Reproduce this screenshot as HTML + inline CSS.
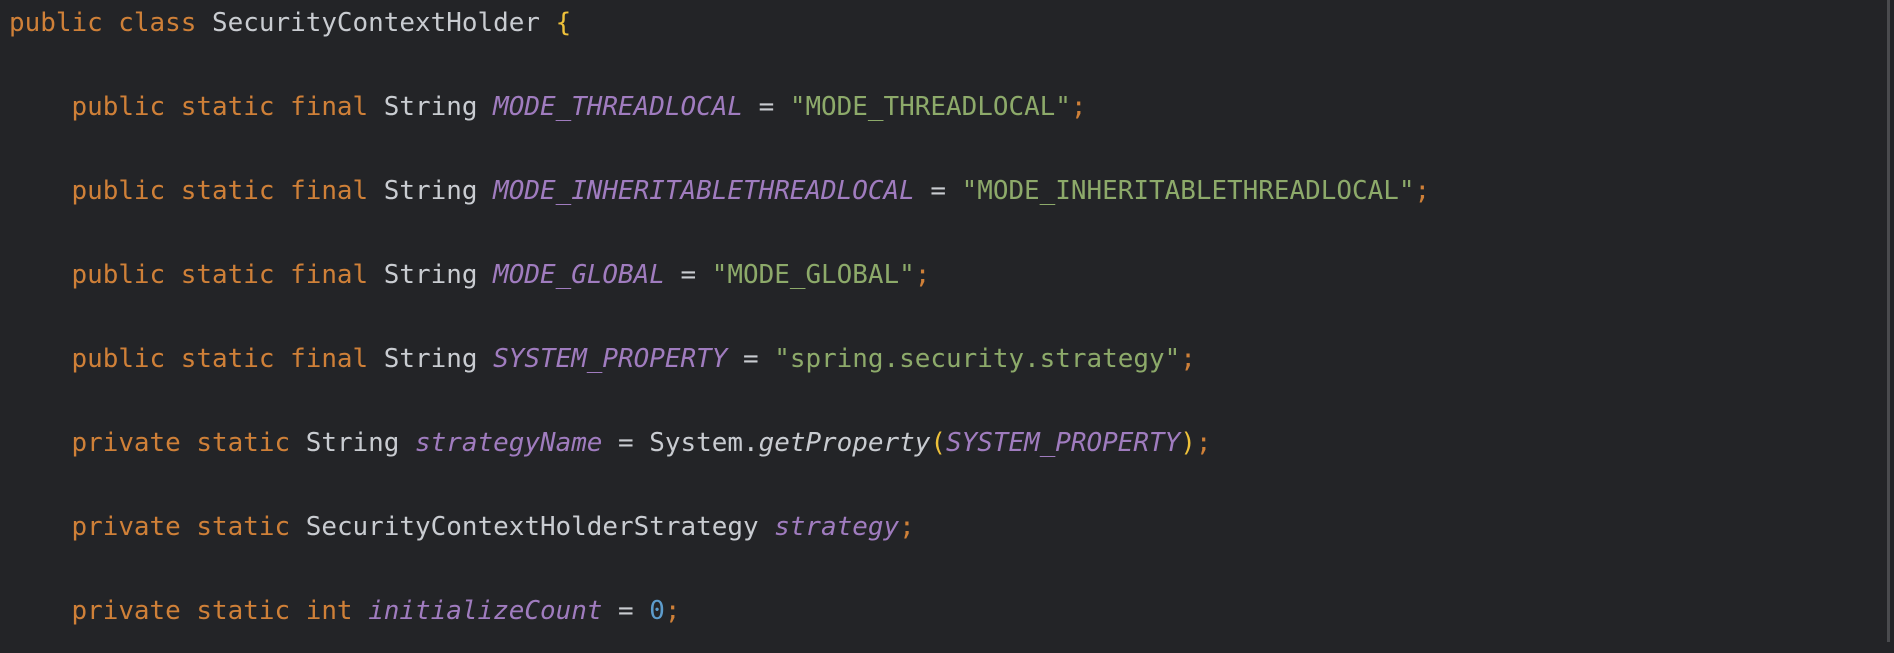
<!DOCTYPE html>
<html><head><meta charset="utf-8"><style>
html,body{margin:0;padding:0;background:#232427;width:1894px;height:642px;overflow:hidden}
pre{margin:0;position:absolute;left:9px;top:-19px;font-family:"DejaVu Sans Mono","Liberation Mono",monospace;font-size:25.95px;line-height:84px;color:#c9ccd1}
.k{color:#cf8038}.p{color:#a07cbf;font-style:italic}.s{color:#8daa6a}.y{color:#eec13a}.n{color:#5d9ccc}.i{font-style:italic}
.bar{position:absolute;left:1887px;top:0;width:3px;height:642px;background:#4a4b4e}
</style></head><body>
<pre><span class="k">public class</span> SecurityContextHolder <span class="y">{</span>
    <span class="k">public static final</span> String <span class="p">MODE_THREADLOCAL</span> = <span class="s">"MODE_THREADLOCAL"</span><span class="k">;</span>
    <span class="k">public static final</span> String <span class="p">MODE_INHERITABLETHREADLOCAL</span> = <span class="s">"MODE_INHERITABLETHREADLOCAL"</span><span class="k">;</span>
    <span class="k">public static final</span> String <span class="p">MODE_GLOBAL</span> = <span class="s">"MODE_GLOBAL"</span><span class="k">;</span>
    <span class="k">public static final</span> String <span class="p">SYSTEM_PROPERTY</span> = <span class="s">"spring.security.strategy"</span><span class="k">;</span>
    <span class="k">private static</span> String <span class="p">strategyName</span> = System.<span class="i">getProperty</span><span class="y">(</span><span class="p">SYSTEM_PROPERTY</span><span class="y">)</span><span class="k">;</span>
    <span class="k">private static</span> SecurityContextHolderStrategy <span class="p">strategy</span><span class="k">;</span>
    <span class="k">private static int</span> <span class="p">initializeCount</span> = <span class="n">0</span><span class="k">;</span></pre>
<div class="bar"></div>
</body></html>
